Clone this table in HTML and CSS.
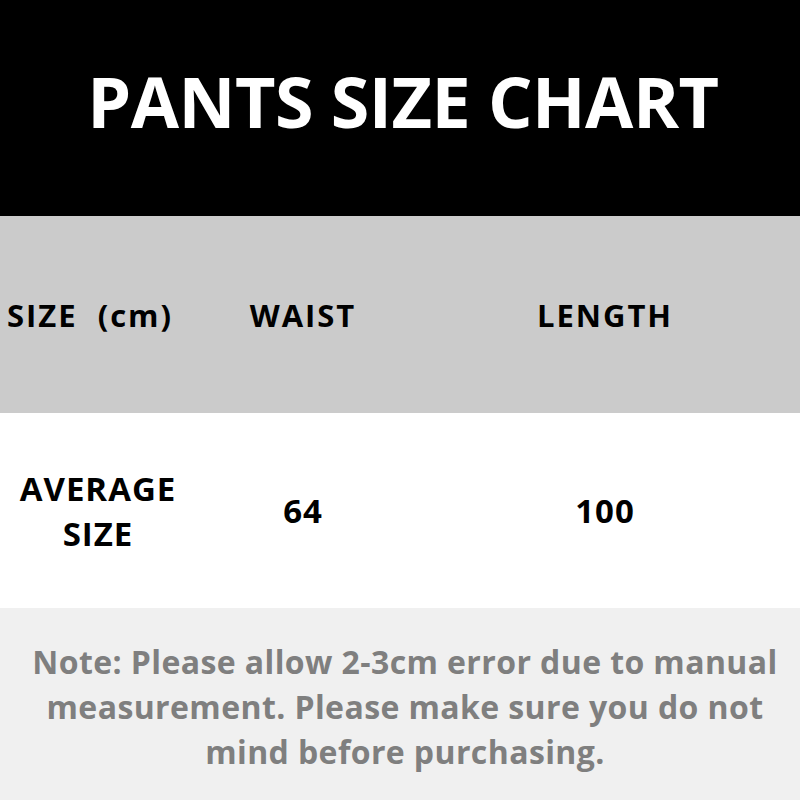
FILE: index.html
```html
<!DOCTYPE html>
<html>
<head>
<meta charset="utf-8">
<link rel="stylesheet" href="styles.css">
</head>
<body>
<div class="chart">
  <div class="title-band"><h1 class="title">PANTS SIZE CHART</h1></div>
  <div class="row head-row">
    <div class="cell first head-first">SIZE&nbsp;&nbsp;(cm)</div>
    <div class="cell">WAIST</div>
    <div class="cell">LENGTH</div>
  </div>
  <div class="row body-row">
    <div class="cell first">AVERAGE<br>SIZE</div>
    <div class="cell">64</div>
    <div class="cell">100</div>
  </div>
  <div class="note">
    <p class="note-text">Note: Please allow 2-3cm error due to manual<br>measurement. Please make sure you do not<br>mind before purchasing.</p>
  </div>
</div>
</body>
</html>
```
FILE: styles.css
```css
html, body {
  margin: 0;
  padding: 0;
}
body {
  font-family: "Open Sans", "Noto Sans", sans-serif;
  font-weight: 700;
}
.chart {
  width: 800px;
  height: 800px;
  display: flex;
  flex-direction: column;
}
.title-band {
  height: 216px;
  background: #000;
  display: flex;
  justify-content: center;
  padding-left: 6px;
}
.title {
  margin: 0;
  padding-top: 56px;
  color: #fff;
  font-size: 70px;
  line-height: 90px;
  font-weight: 700;
  letter-spacing: -0.5px;
}
.row {
  display: grid;
  grid-template-columns: 196px 214px 390px;
  align-items: center;
}
.head-row {
  height: 197px;
  background: #cbcbcb;
  font-size: 31px;
  letter-spacing: 2px;
}
.body-row {
  height: 195px;
  background: #fff;
  font-size: 33px;
  line-height: 45px;
  letter-spacing: 1px;
}
.cell {
  text-align: center;
  color: #000;
}
.head-first {
  padding-right: 16px;
}
.note {
  flex: 1;
  background: #f0f0f0;
  display: flex;
  justify-content: center;
  padding-left: 10px;
}
.note-text {
  margin: 0;
  padding-top: 31px;
  text-align: center;
  color: #7f7f7f;
  font-size: 32px;
  line-height: 45px;
  letter-spacing: 0.4px;
}
```
